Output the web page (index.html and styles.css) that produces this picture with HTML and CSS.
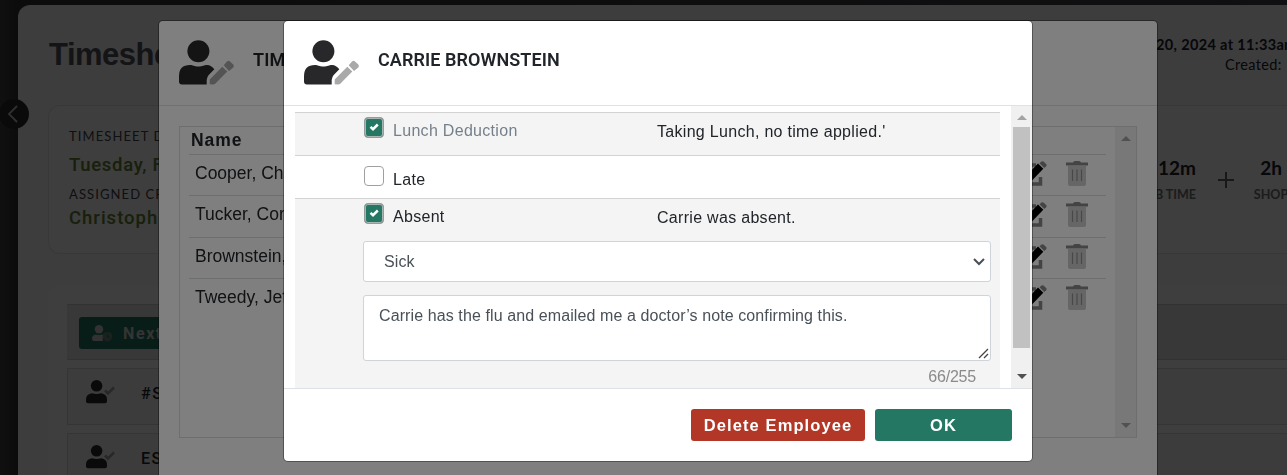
FILE: index.html
```
<!DOCTYPE html>
<html lang="en">
<head>
    <meta charset="utf-8">
    <title>Timesheet</title>
    <link rel="stylesheet" href="styles.css">
</head>
<body>
    <svg class="sprite" width="0" height="0">
        <symbol id="user-edit" viewBox="0 0 56 46">
            <circle cx="19.4" cy="11.3" r="11"/>
            <path d="M11 25c3 0 4 1.600 8.400 1.600S25 25 28 25c3 0 5.300 1.600 7.300 4.300L29.500 35.200Q28 37 27.700 40V44.500H3Q0 44.500 0 41.500V36Q0 25 11 25z"/>
            <path class="soft" d="M30.700 44.300V39.500L43.300 26.700l5 4.700L36 44q-1 .5-2 .4zM44.700 25.200L48 21.500q1.500-1.500 3 0l3.300 3q1.200 1.500 0 3L50 31z"/>
        </symbol>
        <symbol id="user-check" viewBox="0 0 30 24">
            <circle cx="10.600" cy="5.800" r="5.800"/>
            <path d="M6 13.300q4.600 1.600 9.200 0 5.800.7 5.800 6.200v2q0 1.800-2 1.800H2q-2 0-2-1.800v-2Q0 14 6 13.300z"/>
            <path class="tick" d="M19 10.500l3 3L28 7.500"/>
        </symbol>
        <symbol id="edit" viewBox="0 0 26 26">
            <path class="sheet" d="M14 4H3v19h15.500v-7"/>
            <path d="M3.500 21l1-6.500L16 2.500l5.300 5.300L9.500 20z"/>
            <path class="rubber" d="M17.500 2.200L19.500.5q1.200-.8 2.300.2l2.300 2.300q1 1.100 0 2.200L22.300 7z"/>
        </symbol>
        <symbol id="trash" viewBox="0 0 22 26">
            <path class="can" d="M2 5h18v18q0 2-2 2H4q-2 0-2-2z"/>
            <path class="lid" d="M0 1.500h7q.5-1.500 2-1.500h4q1.500 0 2 1.500h7v3H0z"/>
            <path class="ribs" d="M6.500 8.500v11.500M11 8.500v11.500M15.500 8.500v11.500"/>
        </symbol>
    </svg>

    <main class="page">
        <header class="page-header">
            <h1>Timesheet</h1>
            <div class="stamps">
                <strong>20, 2024 at 11:33am</strong>
                <span>Created:</span>
            </div>
        </header>
        <section class="summary">
            <div class="facts">
                <div class="label">TIMESHEET D</div>
                <div class="value">Tuesday, F</div>
                <div class="label">ASSIGNED CR</div>
                <div class="value crew-name">Christoph</div>
            </div>
            <div class="totals">
                <div class="total job"><b>12m</b><small>B TIME</small></div>
                <svg class="plus" width="16" height="16" viewBox="0 0 16 16"><path d="M8 0v16M0 8h16"/></svg>
                <div class="total shop"><b>2h</b><small>SHOP</small></div>
            </div>
        </section>
        <section class="crew">
            <div class="toolbar">
                <button class="next">
                    <svg width="22" height="17" viewBox="0 0 22 17">
                        <circle cx="7" cy="4.200" r="4.200"/>
                        <path d="M4 9.500q3 1 6 0l2 .8q-2 2-1 5.700H2q-2 0-2-2Q0 9.800 4 9.500z"/>
                        <circle class="clock" cx="15.500" cy="11.700" r="4.800"/>
                        <path class="hands" d="M15.500 9v3h2"/>
                    </svg>
                    Next
                </button>
            </div>
            <div class="crew-row"><svg width="30" height="24"><use href="#user-check"/></svg>#SHOP</div>
            <div class="crew-row"><svg width="30" height="24"><use href="#user-check"/></svg>ESTIMATE</div>
        </section>
    </main>
    <div class="back">
        <svg width="10" height="18" viewBox="0 0 10 18"><path d="M9 1L1 9l8 8"/></svg>
    </div>

    <div class="backdrop"></div>
    <div class="modal modal-list">
        <header class="modal-header">
            <svg width="56" height="46"><use href="#user-edit"/></svg>
            <h2>TIMESHEET</h2>
        </header>
        <div class="list-box">
            <div class="names">
                <div class="names-head">Name</div>
                <div class="name-row">Cooper, Christopher<span class="tools"><svg width="26" height="26"><use href="#edit"/></svg><svg width="22" height="26"><use href="#trash"/></svg></span></div>
                <div class="name-row">Tucker, Corin<span class="tools"><svg width="26" height="26"><use href="#edit"/></svg><svg width="22" height="26"><use href="#trash"/></svg></span></div>
                <div class="name-row">Brownstein, Carrie<span class="tools"><svg width="26" height="26"><use href="#edit"/></svg><svg width="22" height="26"><use href="#trash"/></svg></span></div>
                <div class="name-row">Tweedy, Jeff<span class="tools"><svg width="26" height="26"><use href="#edit"/></svg><svg width="22" height="26"><use href="#trash"/></svg></span></div>
            </div>
            <div class="scroll"><i class="up"></i><i class="down"></i></div>
        </div>
    </div>

    <div class="backdrop"></div>
    <div class="modal modal-employee">
        <header class="modal-header">
            <svg width="56" height="46"><use href="#user-edit"/></svg>
            <h2>CARRIE BROWNSTEIN</h2>
        </header>
        <div class="modal-body">
            <div class="form">
                <div class="option lunch">
                    <span class="check on"><svg width="10" height="8" viewBox="0 0 10 8"><path d="M1.500 3.800L4 6.200 8.800 1.500"/></svg></span>
                    <label>Lunch Deduction</label>
                    <p>Taking Lunch, no time applied.'</p>
                </div>
                <div class="option late">
                    <span class="check"></span>
                    <label>Late</label>
                </div>
                <div class="option absent">
                    <span class="check on"><svg width="10" height="8" viewBox="0 0 10 8"><path d="M1.500 3.800L4 6.200 8.800 1.500"/></svg></span>
                    <label>Absent</label>
                    <p>Carrie was absent.</p>
                </div>
                <div class="reason">
                    <div class="select">Sick
                        <svg width="12" height="8" viewBox="0 0 12 8"><path d="M1 1l5 5 5-5"/></svg>
                    </div>
                    <div class="note">Carrie has the flu and emailed me a doctor’s note confirming this.
                        <svg width="11" height="11" viewBox="0 0 11 11"><path d="M1 10l9-9M6 10l4-4"/></svg>
                    </div>
                    <div class="count">66/255</div>
                </div>
            </div>
            <div class="scroll"><i class="up"></i><span class="thumb"></span><i class="down"></i></div>
        </div>
        <footer class="modal-footer">
            <button class="btn delete">Delete Employee</button>
            <button class="btn ok">OK</button>
        </footer>
    </div>
</body>
</html>
```

FILE: styles.css
```
* { box-sizing: border-box; }
body { margin: 0; height: 475px; overflow: hidden; background: linear-gradient(90deg, #404040, #303030 18px, #404048); font-family: "Liberation Sans", Arial, sans-serif; color: #212529; }
h1, h2, p { margin: 0; }
svg { flex: none; fill: #28282b; }
button { border: 0; font-family: inherit; }
.sprite { position: absolute; }

/* page */
.page { height: 470px; overflow: hidden; margin: 5px 0 0 18px; background: #f4f4f4; border-radius: 12px 0 0 0; font-family: Lato, sans-serif; }
.page-header { display: flex; height: 100px; padding: 29px 0 0 31px; }
.page-header h1 { flex: none; width: 1107px; font: bold 31px/41px "Liberation Sans", Arial, sans-serif; letter-spacing: -.5px; color: #505058; }
.stamps { flex: none; width: 140px; display: flex; flex-direction: column; font-size: 14.500px; line-height: 20px; white-space: nowrap; color: #202028; letter-spacing: .35px; padding-top: 1px; }
.stamps span { padding-left: 69px; }
.summary { display: flex; height: 149px; margin-left: 30px; border: 1px solid #e2e2e2; border-right: 0; border-radius: 12px 0 0 12px; background: #f8f8f8; }
.facts { flex: none; width: 1087px; padding: 20px 0 0 20px; }
.label { font-size: 13px; line-height: 20px; letter-spacing: 1.1px; color: #404048; }
.value { font: 500 18.500px/29px Roboto, sans-serif; height: 38px; padding-top: 5px; letter-spacing: .7px; color: #608030; }
.value.crew-name { padding-top: 0; letter-spacing: 1px; }
.totals { flex: none; display: flex; padding-top: 49px; }
.total { width: 60px; display: flex; flex-direction: column; align-items: center; white-space: nowrap; }
.total b { font-size: 19px; line-height: 26px; color: #202028; }
.total small { font-size: 12.500px; line-height: 28px; font-weight: bold; color: #707070; }
.total.job { align-items: flex-end; }
.total.shop { width: 34px; }
.plus { margin: 17px 20px 0 22px; fill: none; stroke: #606060; stroke-width: 2; }
.crew { height: 220px; margin: 31px 0 0 30px; padding: 19px 0 0 19px; background: #fafafa; border-radius: 12px 0 0 0; }
.toolbar { height: 56px; padding: 12px 0 0 12px; border: 1px solid #c8c8c8; border-width: 1px 0; background: #e2e2e2; }
.next { width: 130px; height: 32px; display: flex; align-items: center; gap: 9px; padding: 0 13px; border-radius: 3px; background: #247762; font-family: Roboto, sans-serif; font-size: 16px; font-weight: bold; letter-spacing: 1.6px; color: #d0d0d0; }
.next svg { fill: #c8c8c8; }
.next .clock { fill: #688880; }
.next .hands { fill: none; stroke: #247762; }
.crew-row { display: flex; height: 57px; margin-top: 8px; padding: 11px 0 0 18px; gap: 25px; border: 1px solid #d4d4d4; border-right: 0; background: #f1f1f1; font: 500 16px/28px Roboto, sans-serif; letter-spacing: 1.5px; }
.tick { fill: none; stroke: #a0a0a0; stroke-width: 2.500; }
.back { position: absolute; top: 99px; left: -1px; width: 30px; height: 30px; display: flex; align-items: center; justify-content: center; padding-right: 3px; border-radius: 50%; background: #282828; }
.back svg { fill: none; stroke: #c0c0c0; stroke-width: 1.800; }

/* modals */
.backdrop { position: fixed; inset: 0; background: rgba(0, 0, 0, .5); }
.modal { position: fixed; top: 21px; background: #fff; border-radius: 4px; box-shadow: 0 0 0 1px rgba(0, 0, 0, .35); }
.modal-list { left: 159px; width: 998px; height: 480px; }
.modal-employee { left: 284px; width: 748px; height: 440px; overflow: hidden; }
.modal-header { display: flex; height: 85px; padding: 19px 0 0 20px; border-bottom: 1px solid #dee2e6; }
.modal-header h2 { margin-left: 18px; font: 600 18px/40px Roboto, sans-serif; letter-spacing: .08px; color: #212529; }
.soft { fill: #a9a9a9; }
.list-box { display: flex; justify-content: space-between; width: 958px; height: 312px; margin: 20px 0 0 20px; border: 1px solid #dcdcdc; }
.names { width: 917px; margin-left: 9px; }
.names-head { height: 28px; padding-left: 2px; border-bottom: 1px solid #dcdcdc; font-size: 17.500px; line-height: 27px; font-weight: bold; letter-spacing: .9px; }
.name-row { display: flex; justify-content: space-between; height: 41.300px; padding: 0 18px 0 6px; border-bottom: 1px solid #dcdcdc; font-size: 17.500px; line-height: 36px; }
.name-row:last-child { border: 0; }
.tools { display: flex; gap: 18px; padding-top: 6px; }
.tools svg { fill: #000; }
.sheet { fill: none; stroke: #888; stroke-width: 3.500; }
.rubber, .lid { fill: #888; }
.can { fill: #ccc; }
.ribs { stroke: #909090; stroke-width: 1.200; }

.scroll { flex: none; width: 21px; display: flex; flex-direction: column; align-items: center; padding: 9px 0; background: #f0f0f0; }
.up, .down { border: 5px solid transparent; border-top-width: 0; border-bottom-color: #a3a3a3; }
.down { margin-top: auto; border-top: 5px solid #a3a3a3; border-bottom-width: 0; }
.thumb { width: 17px; height: 221px; margin-top: 7px; margin-right: 1px; background: #c1c1c1; }
.modal-body .down { border-top-color: #505050; }

.modal-body { display: flex; justify-content: space-between; height: 282px; overflow: hidden; }
.form { width: 705px; margin: 6px 0 0 11px; font-size: 16px; letter-spacing: .3px; }
.option { display: flex; height: 43px; padding-left: 69px; border-top: 1px solid #d3d3d3; background: #f4f4f4; }
.option label { width: 264px; margin-left: 9px; line-height: 36px; }
.option p { line-height: 37px; }
.lunch label { color: #76808a; }
.late { background: #fff; }
.late label { line-height: 47px; }
.late .check { margin-top: 10px; }
.check { flex: none; width: 20px; height: 20px; margin-top: 4px; border: 1px solid #a0a0a0; border-radius: 4px; background: #fff; }
.check.on { height: 21px; display: flex; align-items: center; justify-content: center; padding-bottom: 1px; border: 1px solid #999; background: #247762; box-shadow: inset 0 0 0 1px #a8b5b1; }
.check svg { fill: none; stroke: #fff; stroke-width: 2.500; }
.reason { height: 150px; padding: 0 9px 0 68px; background: #f4f4f4; }
.select, .note { display: flex; justify-content: space-between; border: 1px solid #ced4da; border-radius: 3px; background: #fff; color: #495057; }
.select { height: 41px; align-items: center; padding: 0 5px 0 20px; letter-spacing: .1px; }
.select svg { fill: none; stroke: #495057; stroke-width: 2; }
.note { height: 66px; margin-top: 13px; padding: 0 1px 1px 15px; line-height: 39px; letter-spacing: .1px; }
.note svg { align-self: flex-end; fill: none; stroke: #444; stroke-width: 1.300; }
.count { padding: 6px 15px 0 0; line-height: 20px; text-align: right; color: #8a8a8a; letter-spacing: -.2px; }

.modal-footer { display: flex; justify-content: flex-end; gap: 10px; height: 73px; padding: 20px 20px 0; border-top: 1px solid #dee2e6; }
.btn { height: 32px; border-radius: 3px; font-size: 16.500px; font-weight: bold; letter-spacing: 1.100px; color: #fff; }
.delete { width: 174px; padding: 0; background: #b23727; }
.ok { width: 137px; background: #247762; }
```
